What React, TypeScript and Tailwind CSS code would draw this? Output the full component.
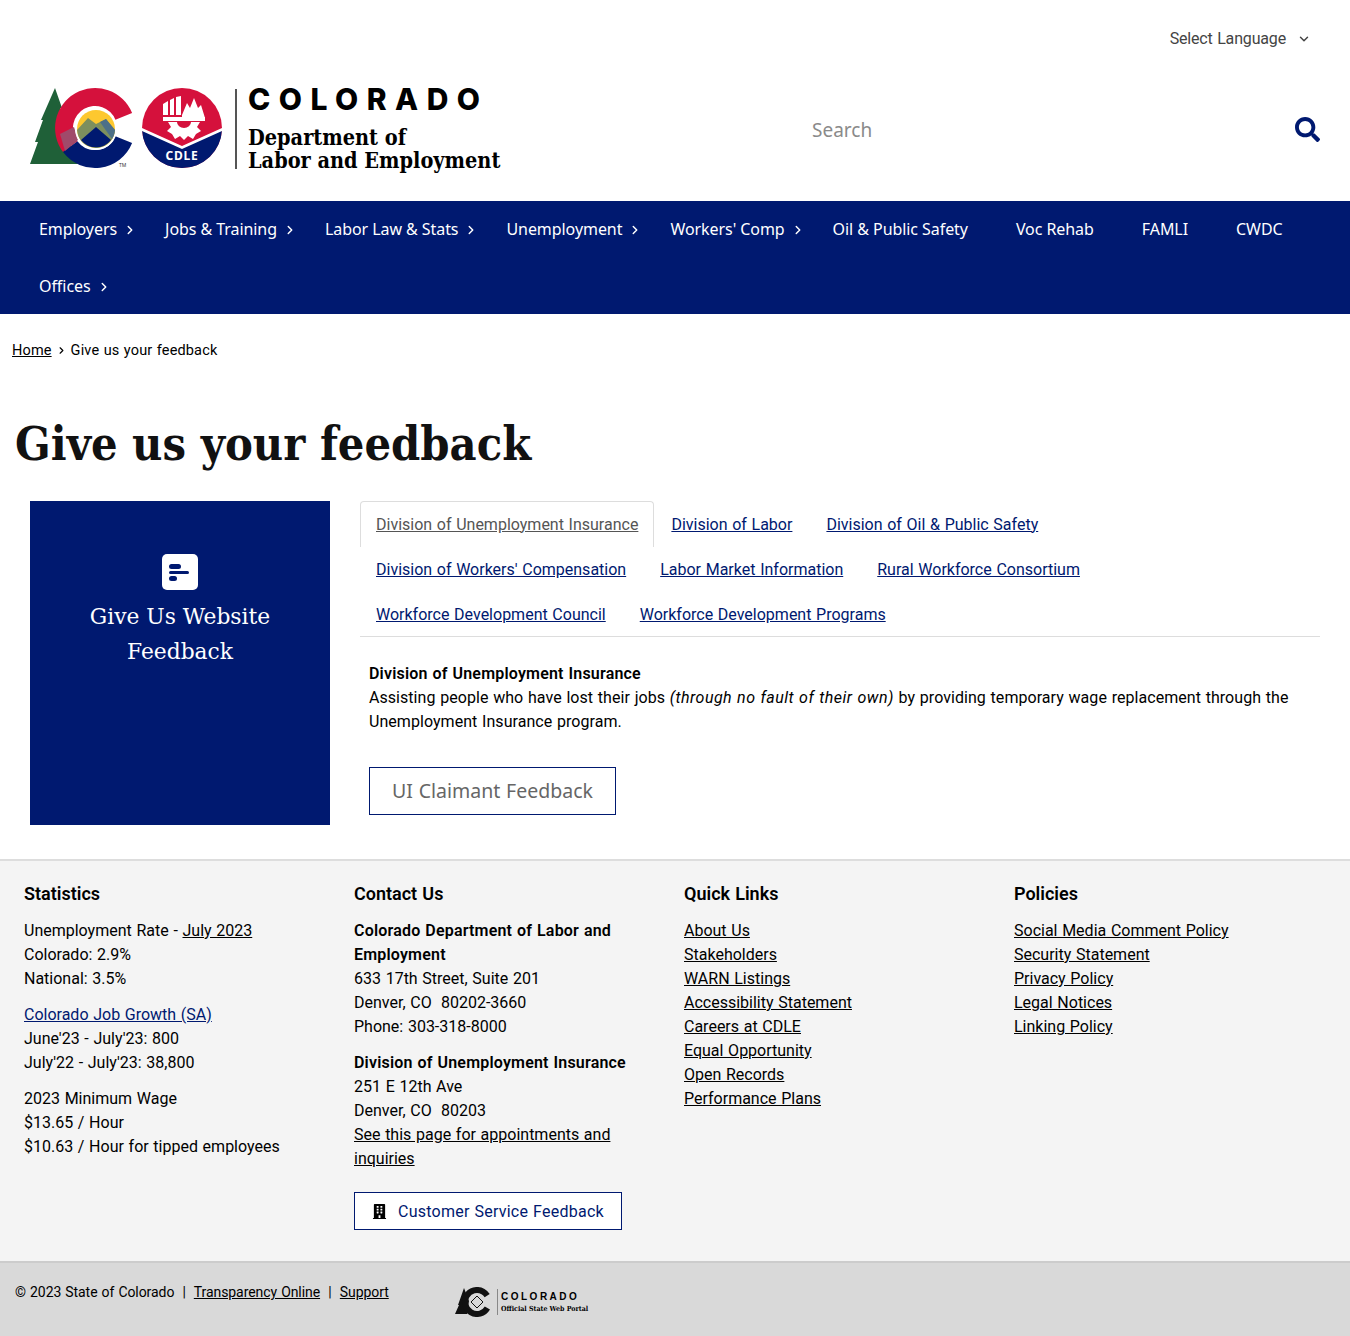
import React from "react";
import { ChevronDown, ChevronRight } from "lucide-react";
import { FaBuilding, FaSearch } from "react-icons/fa";

const navItems = [
  { label: "Employers", sub: true },
  { label: "Jobs & Training", sub: true },
  { label: "Labor Law & Stats", sub: true },
  { label: "Unemployment", sub: true },
  { label: "Workers' Comp", sub: true },
  { label: "Oil & Public Safety", sub: false },
  { label: "Voc Rehab", sub: false },
  { label: "FAMLI", sub: false },
  { label: "CWDC", sub: false },
  { label: "Offices", sub: true },
];

const tabs = [
  "Division of Labor",
  "Division of Oil & Public Safety",
  "Division of Workers' Compensation",
  "Labor Market Information",
  "Rural Workforce Consortium",
  "Workforce Development Council",
  "Workforce Development Programs",
];

const quickLinks = [
  "About Us",
  "Stakeholders",
  "WARN Listings",
  "Accessibility Statement",
  "Careers at CDLE",
  "Equal Opportunity",
  "Open Records",
  "Performance Plans",
];

const policies = [
  "Social Media Comment Policy",
  "Security Statement",
  "Privacy Policy",
  "Legal Notices",
  "Linking Policy",
];

// Colorado C + CDLE seal, coordinates are page pixels
const LogoMark = () => (
  <svg width="200" height="90" viewBox="30 84 200 90" className="shrink-0">
    <path d="M55 88 L62 108 L60 108 L68 128 L64 128 L78 164 L30 164 L38 142 L35 142 L43 120 L41 120 Z" fill="#1f6038" />
    <path d="M132.100 113 A40 40 0 1 0 63.050 152.070 L77.400 141.200 A22 22 0 1 1 115.400 119.800 Z" fill="#d5113c" />
    <path d="M63.050 152.070 A40 40 0 0 0 132.100 143 L115.400 136.200 A22 22 0 0 1 77.400 141.200 Z" fill="#001970" />
    <path d="M60 134 L74 127 L78 140 L65 151 Z" fill="#a04a6a" />
    <circle cx="96" cy="129" r="21" fill="#fff" />
    <circle cx="96" cy="129" r="19" fill="#fdc82f" />
    <path d="M77 130 L88 118 L96 124 L106 119 L115 130 A19 19 0 0 1 78 135 Z" fill="#7d8f5e" />
    <path d="M100 122 L106 119 L115 130 A19 19 0 0 1 112 139 Z" fill="#4d7088" />
    <path d="M81 140 L96 127 L111 140 A19 19 0 0 1 81 140 Z" fill="#001970" />
    <circle cx="182" cy="128" r="40" fill="#d5113c" />
    <path d="M221.950 130 L182 148 L142.050 130 A40 40 0 0 0 221.950 130 Z" fill="#001970" />
    <path d="M142 128 L182 146 L222 128 L222 131 L182 149 L142 131 Z" fill="#fff" />
    <path d="M163 104 L168 101 L168 115 L163 115 Z M170 100 L174 98 L174 115 L170 115 Z M176 97 L181 96 L181 115 L176 115 Z" fill="#fff" />
    <path d="M182 115 L187 103 L190 108 L194 98 L198 108 L201 105 L205 118 L182 118 Z" fill="#fff" />
    <rect x="163" y="117" width="42" height="4" fill="#fff" />
    <path d="M168 122 L200 122 L197 127 L201 131 L196 134 L193 139 L188 136 L184 140 L180 136 L175 139 L172 134 L167 131 L171 127 Z" fill="#fff" />
    <path d="M177 122 A7 6 0 0 0 191 122 Z" fill="#d5113c" />
    <text x="182" y="160" textAnchor="middle" fill="#fff" fontSize="12" fontWeight="700" fontFamily="Noto Sans, sans-serif" letterSpacing="0.8">CDLE</text>
    <text x="119" y="167" fill="#333" fontSize="5" fontFamily="Noto Sans, sans-serif">TM</text>
  </svg>
);

const SmallLogo = () => (
  <svg width="40" height="30" viewBox="0 0 40 30" className="shrink-0">
    <path d="M9 1 L14 14 L12 27 L0 27 L4 18 L3 18 Z" fill="#111" />
    <circle cx="22" cy="15" r="12" fill="none" stroke="#111" strokeWidth="6" strokeDasharray="62 14" transform="rotate(30 22 15)" />
    <path d="M16 15 L22 9 L28 15 L22 21 Z" fill="none" stroke="#111" strokeWidth="1" />
  </svg>
);

const Link = ({ children, blue }: { children: React.ReactNode; blue?: boolean }) => (
  <a href="#" className={blue ? "underline text-[#001970]" : "underline text-black"}>
    {children}
  </a>
);

const App: React.FC = () => {
  return (
    <div className="w-[1350px] font-['Roboto',sans-serif] text-[16px] leading-6 [word-spacing:0.7px] text-black bg-white">
      {/* Language + logo + search */}
      <header className="h-[201px]">
        <div className="flex justify-end items-center gap-[11px] pr-[39px] pt-[27px] h-[50px] text-[#444]">
          <span className="tracking-[-0.01em]">Select Language</span>
          <ChevronDown size={14} strokeWidth={2.5} />
        </div>
        <div className="flex items-center pl-[30px] pt-[34px]">
          <LogoMark />
          <div className="w-[2px] h-[80px] bg-[#555] ml-[5px]" />
          <div className="ml-[11px] h-[88px] w-[270px] [word-spacing:0]">
            <div className="font-['Inter',sans-serif] font-extrabold text-[30px] leading-[26px] pt-[1px] tracking-[0.283em] text-black">COLORADO</div>
            <div className="mt-[14px] font-['DejaVu_Serif_Condensed','DejaVu_Serif',serif] font-bold text-[21.500px] leading-[23px]">
              Department of
              <br />
              Labor and Employment
            </div>
          </div>
          <span className="ml-[294px] pt-[2px] font-['Noto_Sans',sans-serif] text-[19px] text-[#8a8a8a]">Search</span>
          <span className="ml-auto pr-[30px]">
            <FaSearch size={25} className="text-[#001970]" />
          </span>
        </div>
      </header>

      {/* Main nav */}
      <nav className="bg-[#001970] h-[113px] pl-[15px] text-white flex flex-wrap font-['Noto_Sans',sans-serif] tracking-[-0.004em] [word-spacing:0]">
        {navItems.map((item) => (
          <div key={item.label} className="relative h-[56.500px] px-6 flex items-center">
            {item.label}
            {item.sub && <ChevronRight size={14} strokeWidth={2.5} className="absolute right-[4px] top-[22px]" />}
          </div>
        ))}
      </nav>

      {/* Breadcrumb */}
      <div className="flex items-center pl-3 pt-[25px] h-[48px] text-[14.500px] tracking-[0.01em]">
        <Link>Home</Link>
        <ChevronRight size={11} strokeWidth={2.5} className="mx-[4px]" />
        <span>Give us your feedback</span>
      </div>

      <h1 className="pl-[15px] pt-[48px] h-[139px] font-['DejaVu_Serif_Condensed','DejaVu_Serif',serif] font-bold text-[46.500px] leading-[68px] [word-spacing:0] text-[#111]">Give us your feedback</h1>

      {/* Feedback content */}
      <section className="flex pl-[30px] pr-[30px] h-[358px]">
        <div className="w-[300px] h-[324px] bg-[#001970] text-white flex flex-col items-center pt-[53px]">
          <div className="w-9 h-9 rounded-[5px] bg-white flex flex-col justify-center gap-[2px] pl-[7px]">
            <span className="w-[12px] h-[5px] rounded-full bg-[#001970]" />
            <span className="w-[20px] h-[3px] rounded-full bg-[#001970]" />
            <span className="w-[8px] h-[5px] rounded-full bg-[#001970]" />
          </div>
          <div className="mt-[9px] w-[220px] text-center font-['DejaVu_Serif',serif] text-[21.800px] leading-[35px] [word-spacing:0]">Give Us Website Feedback</div>
        </div>
        <div className="ml-[30px] w-[960px]">
          <div className="flex flex-wrap border-b border-[#ddd] h-[136px] content-start">
            <div className="h-[46px] px-[15px] mr-[1px] flex items-center border border-b-0 border-[#ddd] rounded-t-[4px] underline text-[#555] bg-white">Division of Unemployment Insurance</div>
            {tabs.map((t, i) => (
              <div key={t} className={i < 2 ? "h-[46px] px-4 pt-[1px] mr-[2px] flex items-center underline text-[#001970]" : "h-[45px] px-4 mr-[2px] flex items-center underline text-[#001970]"}>
                {t}
              </div>
            ))}
          </div>
          <div className="pl-[9px] pt-[25px]">
            <p className="font-semibold tracking-[0.012em]">Division of Unemployment Insurance</p>
            <p className="tracking-[0.003em]">
              Assisting people who have lost their jobs <em className="tracking-[0.028em]">(through no fault of their own)</em> by providing temporary wage replacement through the Unemployment Insurance program.
            </p>
            <div className="mt-[33px] w-[247px] h-[48px] border border-[#001970] flex items-center justify-center font-['Noto_Sans',sans-serif] text-[19.500px] text-[#666]">UI Claimant Feedback</div>
          </div>
        </div>
      </section>

      {/* Footer columns */}
      <footer className="bg-[#f4f4f4] border-t-2 border-[#ddd] h-[402px] pl-6 pt-[21px] flex">
        <div className="w-[330px]">
          <h2 className="font-semibold text-[18px] mb-[13px]">Statistics</h2>
          <p>
            Unemployment Rate - <Link>July 2023</Link>
            <br />
            Colorado: 2.9%
            <br />
            National: 3.5%
          </p>
          <p className="mt-3">
            <Link blue>Colorado Job Growth (SA)</Link>
            <br />
            June'23 - July'23: 800
            <br />
            July'22 - July'23: 38,800
          </p>
          <p className="mt-3">
            2023 Minimum Wage
            <br />
            $13.65 / Hour
            <br />
            $10.63 / Hour for tipped employees
          </p>
        </div>
        <div className="w-[330px]">
          <h2 className="font-semibold text-[18px] mb-[13px]">Contact Us</h2>
          <div className="w-[290px]">
            <p className="font-semibold tracking-[0.012em]">Colorado Department of Labor and Employment</p>
            <p>
              633 17th Street, Suite 201
              <br />
              Denver, CO&nbsp; 80202-3660
              <br />
              Phone: 303-318-8000
            </p>
            <p className="mt-3 font-semibold tracking-[0.012em]">Division of Unemployment Insurance</p>
            <p>
              251 E 12th Ave
              <br />
              Denver, CO&nbsp; 80203
              <br />
              <Link>See this page for appointments and inquiries</Link>
            </p>
          </div>
          <div className="mt-[21px] w-[268px] h-[38px] border border-[#001970] bg-white flex items-center pl-[17px] pt-[1px] text-[#001970] tracking-[0.015em]">
            <FaBuilding size={15} className="text-black mr-[11px]" />
            Customer Service Feedback
          </div>
        </div>
        <div className="w-[330px]">
          <h2 className="font-semibold text-[18px] mb-[13px]">Quick Links</h2>
          {quickLinks.map((l) => (
            <div key={l}>
              <Link>{l}</Link>
            </div>
          ))}
        </div>
        <div className="w-[330px]">
          <h2 className="font-semibold text-[18px] mb-[13px]">Policies</h2>
          {policies.map((l) => (
            <div key={l}>
              <Link>{l}</Link>
            </div>
          ))}
        </div>
      </footer>

      {/* Bottom bar */}
      <div className="bg-[#d9d9d9] border-t-2 border-[#ccc] h-[75px] pl-[15px] flex items-start text-[14px] tracking-[-0.005em]">
        <div className="pt-[17px] w-[440px]">
          © 2023 State of Colorado &nbsp;|&nbsp; <Link>Transparency Online</Link> &nbsp;|&nbsp; <Link>Support</Link>
        </div>
        <div className="flex items-center pt-[24px] tracking-normal [word-spacing:0]">
          <SmallLogo />
          <div className="w-px h-[26px] bg-[#888] mx-[2px]" />
          <div className="pl-[1px]">
            <div className="font-['Liberation_Sans',sans-serif] font-bold text-[10px] leading-[13px] tracking-[0.25em]">COLORADO</div>
            <div className="font-['DejaVu_Serif_Condensed','DejaVu_Serif',serif] font-bold text-[7px] leading-[11px]">Official State Web Portal</div>
          </div>
        </div>
      </div>
    </div>
  );
};

export default App;
